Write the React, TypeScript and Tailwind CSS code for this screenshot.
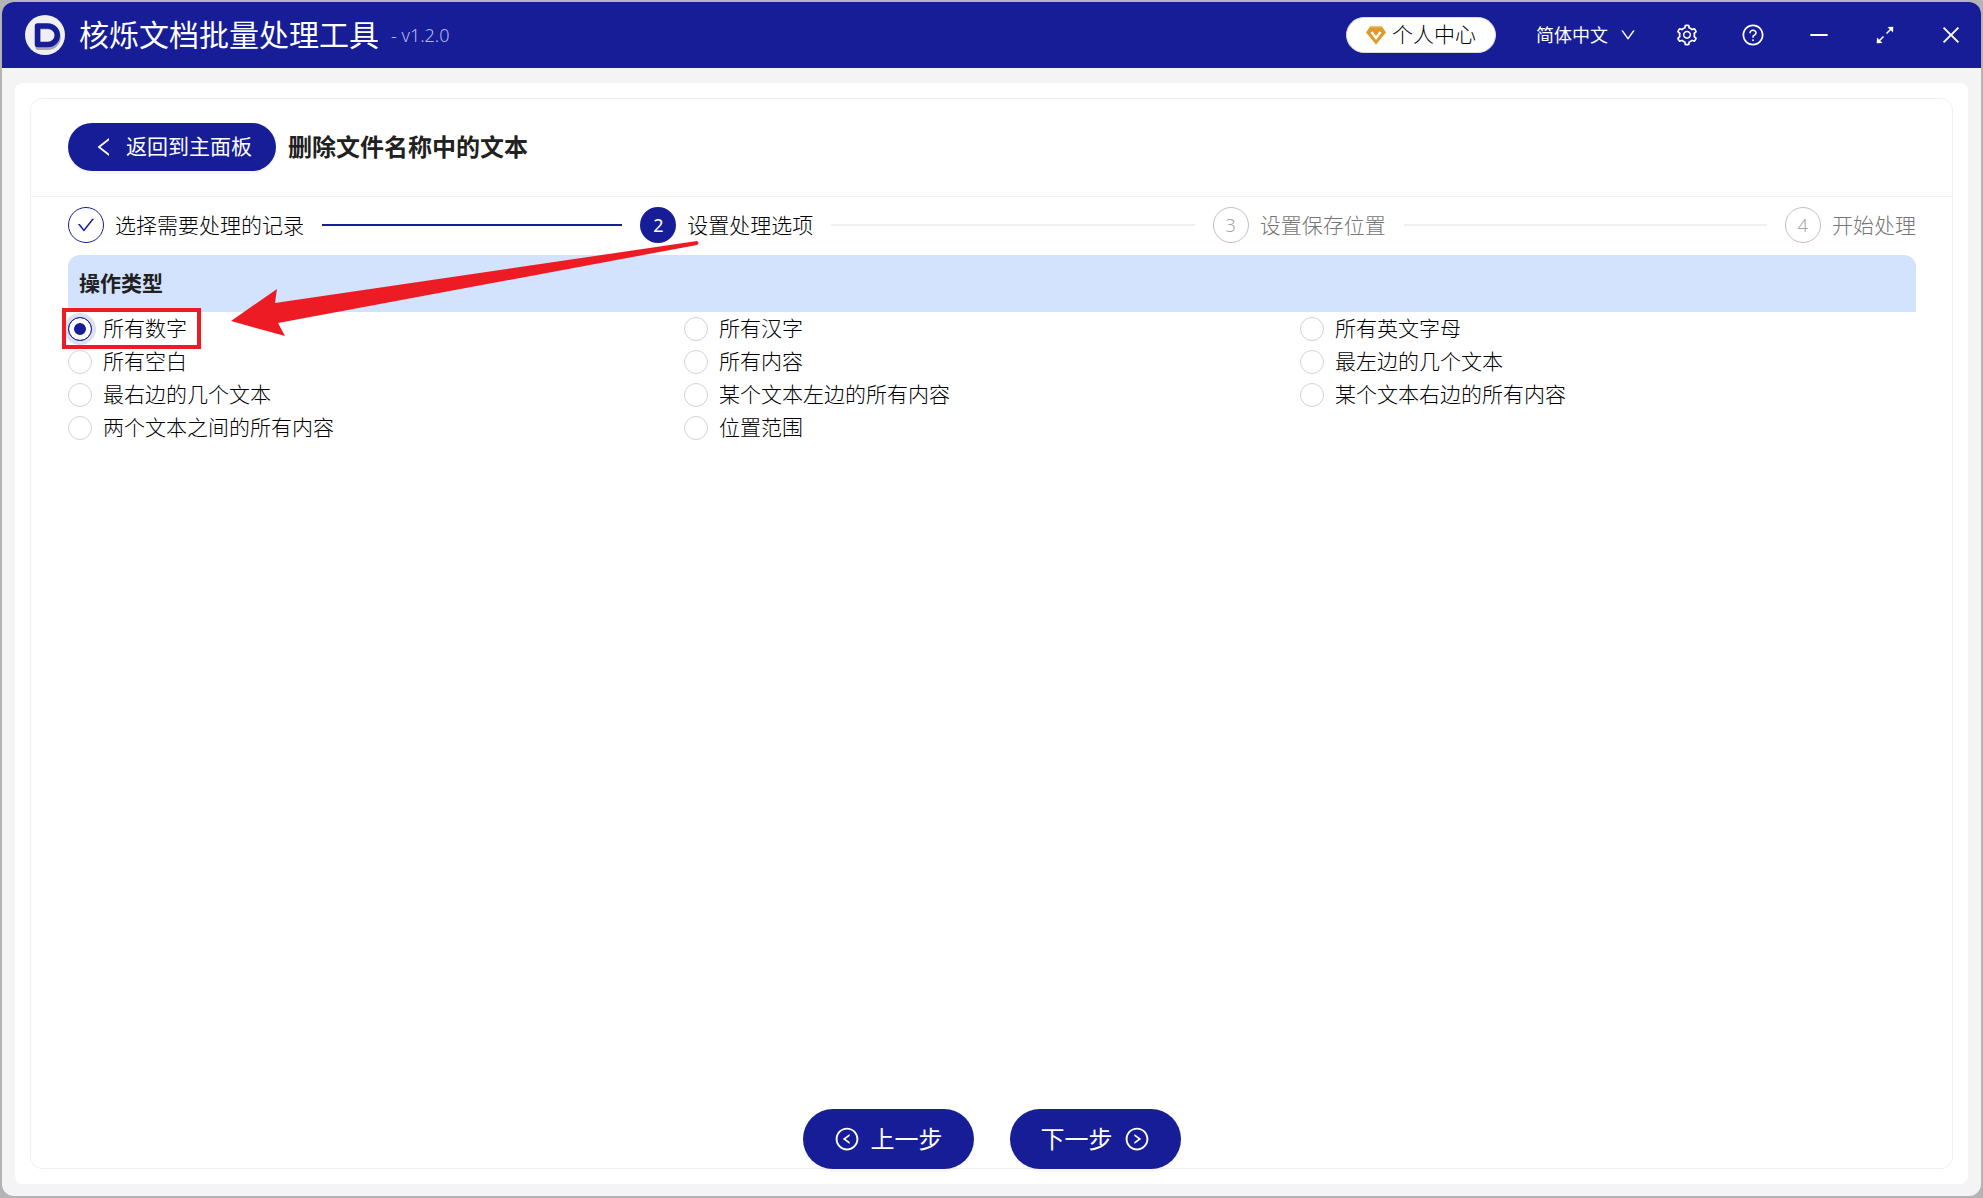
import React, { useState } from "react";
import {
  AiOutlineCheck,
  AiOutlineClose,
  AiOutlineDown,
  AiOutlineLeft,
  AiOutlineLeftCircle,
  AiOutlineMinus,
  AiOutlineQuestionCircle,
  AiOutlineRightCircle,
  AiOutlineSetting,
} from "react-icons/ai";

const steps = [
  "选择需要处理的记录",
  "设置处理选项",
  "设置保存位置",
  "开始处理",
];

const options = [
  "所有数字",
  "所有汉字",
  "所有英文字母",
  "所有空白",
  "所有内容",
  "最左边的几个文本",
  "最右边的几个文本",
  "某个文本左边的所有内容",
  "某个文本右边的所有内容",
  "两个文本之间的所有内容",
  "位置范围",
];

const CURRENT_STEP = 1;

const Logo = () => (
  <svg viewBox="0 0 40 40" className="size-10 shrink-0" aria-hidden="true">
    <circle cx="20" cy="20" r="20" fill="#f0f0f3" />
    <path
      d="M13 12h10a8.500 8.500 0 0 1 0 20.500H13z"
      fill="none"
      stroke="#a5a5b4"
      strokeWidth="5"
      strokeLinejoin="round"
    />
    <path
      d="M12.500 11h10.500a9 9 0 0 1 0 18.500H12.500z"
      fill="none"
      stroke="#171d97"
      strokeWidth="5.500"
      strokeLinejoin="round"
    />
  </svg>
);

const Diamond = () => (
  <svg viewBox="0 0 20 20" className="size-5" aria-hidden="true">
    <path d="M4.500 1h11L20 7.500 10 19.500 0 7.500z" fill="#dc9a27" />
    <path d="M4.500 1h11l1 1.500h-13z" fill="#efc06d" />
    <path
      d="M5.500 7 10 13l4.500-6"
      fill="none"
      stroke="#fff"
      strokeWidth="2.400"
    />
  </svg>
);

const Expand = () => (
  <svg viewBox="0 0 18 18" className="size-[18px]" fill="currentColor">
    <path
      d="M10.500 7.500 15 3M7.500 10.500 3 15"
      stroke="currentColor"
      strokeWidth="1.500"
    />
    <path d="M11.500 1 17.300.700 17 6.500zM1 11.500.700 17.300 6.500 17z" />
  </svg>
);

const TitleBar = () => (
  <header className="flex h-[66px] items-center bg-[#171d97] pr-3 pl-[23px] font-normal text-white">
    <Logo />
    <h1 className="ml-3.5 text-[30px] leading-10">核烁文档批量处理工具</h1>
    <span className="ml-3 text-lg font-light text-[#b4baea]">- v1.2.0</span>

    <button className="ml-auto flex h-9 items-center gap-1.5 rounded-full border border-[#d9d9d9] bg-white px-[19px] text-[21px] font-light text-black">
      <Diamond />
      个人中心
    </button>

    <div className="relative ml-10 flex items-center">
      <select
        aria-label="语言"
        className="w-[101px] appearance-none bg-transparent text-lg text-white outline-none"
      >
        <option>简体中文</option>
      </select>
      <AiOutlineDown className="pointer-events-none absolute right-0 size-[18px]" />
    </div>

    <div className="ml-8 flex gap-[30px]">
      <button aria-label="设置" className="flex size-9 items-center justify-center">
        <AiOutlineSetting className="size-6" />
      </button>
      <button aria-label="帮助" className="flex size-9 items-center justify-center">
        <AiOutlineQuestionCircle className="size-6" />
      </button>
      <button aria-label="最小化" className="flex size-9 items-center justify-center">
        <AiOutlineMinus className="size-6" />
      </button>
      <button aria-label="最大化" className="flex size-9 items-center justify-center">
        <Expand />
      </button>
      <button aria-label="关闭" className="flex size-9 items-center justify-center">
        <AiOutlineClose className="size-6" />
      </button>
    </div>
  </header>
);

const StepIcon = ({ index }: { index: number }) => {
  if (index < CURRENT_STEP) {
    return (
      <span className="flex size-9 shrink-0 items-center justify-center rounded-full border border-[#171d97] text-[#171d97]">
        <AiOutlineCheck className="size-5" />
      </span>
    );
  }
  if (index === CURRENT_STEP) {
    return (
      <span className="flex size-9 shrink-0 items-center justify-center rounded-full bg-[#171d97] text-lg font-normal text-white">
        {index + 1}
      </span>
    );
  }
  return (
    <span className="flex size-9 shrink-0 items-center justify-center rounded-full border border-[#bfbfc8] text-lg text-[#a6a6a6]">
      {index + 1}
    </span>
  );
};

const Steps = () => (
  <ol className="flex gap-[18px]">
    {steps.map((title, i) => {
      const last = i === steps.length - 1;
      return (
        <li
          key={title}
          className={last ? "flex items-center" : "flex flex-1 items-center"}
        >
          <StepIcon index={i} />
          <span
            className={
              i > CURRENT_STEP
                ? "ml-[11px] text-[21px] leading-9 text-[#757575]"
                : "ml-[11px] text-[21px] leading-9 text-black"
            }
          >
            {title}
          </span>
          {!last && (
            <span
              className={
                i < CURRENT_STEP
                  ? "ml-[18px] h-0.5 flex-1 bg-[#171d97]"
                  : "ml-[18px] h-0.5 flex-1 bg-[#f0f0f0]"
              }
            />
          )}
        </li>
      );
    })}
  </ol>
);

const App = () => {
  const [selected, setSelected] = useState(options[0]);

  return (
    <div className="flex min-h-screen bg-[#b4b4b6] p-0.5 font-['Noto_Sans','Noto_Sans_CJK_SC',sans-serif] font-light">
      <div className="flex flex-1 flex-col overflow-hidden rounded-xl bg-[#f4f4f4]">
        <TitleBar />

        <main className="mx-[13px] mt-[15px] mb-3 flex flex-1 flex-col rounded-lg bg-white p-[15px]">
          <div className="flex flex-1 flex-col rounded-xl border border-[#f0f0f0]">
            <div className="flex items-center gap-3 border-b border-[#f0f0f0] px-[37px] pt-6 pb-[25px]">
              <button className="flex h-12 items-center gap-2.5 rounded-full bg-[#171d97] px-6 text-[21px] font-normal text-white shadow-[0_3px_0_rgba(0,0,0,0.03)]">
                <AiOutlineLeft className="size-6" />
                返回到主面板
              </button>
              <h2 className="text-2xl font-bold text-[#212121]">
                删除文件名称中的文本
              </h2>
            </div>

            <div className="pt-2.5 pr-9 pl-[37px]">
              <Steps />

              <section className="relative mt-3">
                <h3 className="rounded-t-xl bg-[#d3e2fd] py-3 pl-[11px] text-[21px] leading-[33px] font-bold text-[#212121]">
                  操作类型
                </h3>

                <div
                  role="radiogroup"
                  aria-label="操作类型"
                  className="grid grid-cols-3"
                >
                  {options.map((option, i) => (
                    <div key={option} className="flex">
                      <label className="relative flex h-[33px] items-center gap-[11px] text-[21px] text-black">
                        <input
                          type="radio"
                          name="operation"
                          checked={selected === option}
                          onChange={() => setSelected(option)}
                          className="size-6 appearance-none rounded-full border border-[#d2d2da] bg-white checked:border-[#171d97] checked:bg-[#171d97] checked:shadow-[inset_0_0_0_5px_#fff,0_0_0_4px_#dfe0ee]"
                        />
                        {option}
                        {/* highlight frame */}
                        {i === 0 && (
                          <span className="pointer-events-none absolute -top-1 -right-3.5 -bottom-1 -left-1.5 border-4 border-[#ed1c24]" />
                        )}
                      </label>
                    </div>
                  ))}
                </div>

                {/* pointer from the current step to the first option */}
                <svg
                  viewBox="0 0 470 98"
                  className="pointer-events-none absolute -top-4 left-[163px] h-[98px] w-[470px]"
                  aria-hidden="true"
                >
                  <path
                    d="M0 82 46 50 44 64 466 2Q469 4 466 6L47 84 54 97Z"
                    fill="#ed1c24"
                  />
                </svg>
              </section>
            </div>

            <footer className="mt-auto -mb-px flex justify-center gap-9">
              <button className="flex h-[60px] items-center gap-[11px] rounded-full bg-[#171d97] px-[31px] text-2xl font-normal text-white shadow-[0_3px_0_rgba(0,0,0,0.03)]">
                <AiOutlineLeftCircle className="size-[26px]" />
                上一步
              </button>
              <button className="flex h-[60px] items-center gap-[11px] rounded-full bg-[#171d97] px-[31px] text-2xl font-normal text-white shadow-[0_3px_0_rgba(0,0,0,0.03)]">
                下一步
                <AiOutlineRightCircle className="size-[26px]" />
              </button>
            </footer>
          </div>
        </main>
      </div>
    </div>
  );
};

export default App;
